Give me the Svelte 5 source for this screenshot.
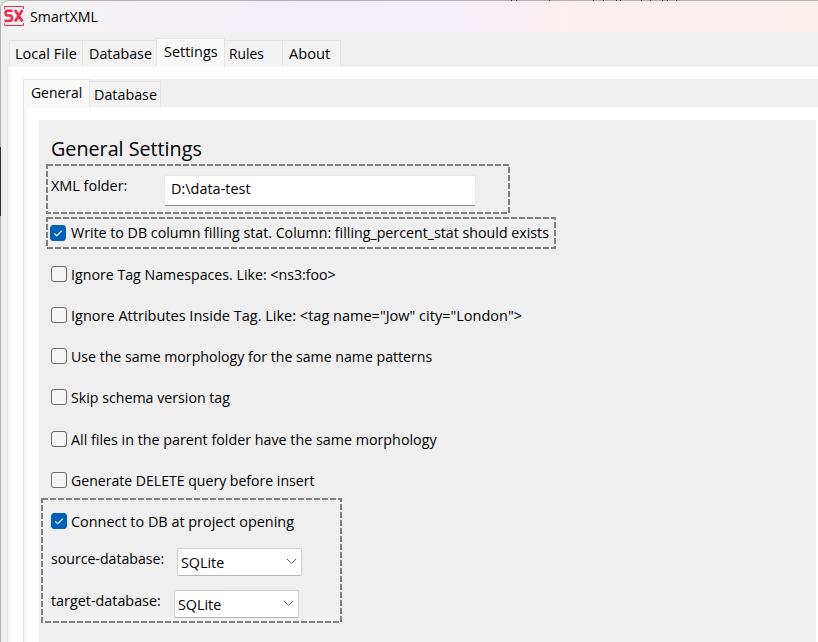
<script>
  const tabs = [
    { label: 'Local File', w: 74, tw: 62, pad: 5 },
    { label: 'Database', w: 75, tw: 63, pad: 6 },
    { label: 'Settings', w: 69, tw: 54, pad: 7, active: true },
    { label: 'Rules', w: 59, tw: 35, pad: 4 },
    { label: 'About', w: 59, tw: 41, pad: 6 }
  ];
  const options = [
    { label: 'Ignore Tag Namespaces. Like: <ns3:foo>', tw: 265 },
    { label: 'Ignore Attributes Inside Tag. Like: <tag name="Jow" city="London">', tw: 451 },
    { label: 'Use the same morphology for the same name patterns', tw: 361 },
    { label: 'Skip schema version tag', tw: 159 },
    { label: 'All files in the parent folder have the same morphology', tw: 366 },
    { label: 'Generate DELETE query before insert', tw: 243 }
  ];
  const specks = [510, 515, 548, 592, 602, 615, 619, 640, 649, 661, 666, 675];

  // Narrows or widens a label so that it fills the given width.
  function fit(node, width) {
    node.style.display = 'inline-block';
    node.style.transformOrigin = '0 50%';
    node.style.flex = 'none';
    const apply = () => {
      const natural = node.offsetWidth;
      node.style.transform = `scaleX(${width / natural})`;
      node.style.marginRight = width - natural + 'px';
    };
    apply();
    document.fonts.ready.then(apply);
  }
</script>

{#snippet frame(w, h)}
  <svg class="frame" width={w} height={h} aria-hidden="true">
    <rect x="1" y="1" width={w - 2} height={h - 2} fill="none" stroke="#808080" stroke-width="2" stroke-dasharray="6 2" />
  </svg>
{/snippet}

{#snippet box(checked)}
  <span class="box" class:checked>
    {#if checked}
      <svg width="16" height="16" viewBox="0 0 16 16"><path d="M4.2 8.3 6.8 10.7 11.8 5.7" fill="none" stroke="#fff" stroke-width="1.1" /></svg>
    {/if}
  </span>
{/snippet}

{#snippet combo()}
  <div class="combo">
    <span use:fit={43}>SQLite</span>
    <svg width="11" height="7" viewBox="0 0 11 7"><path d="M.8.9 5.5 5.4 10.2.9" fill="none" stroke="#555" stroke-width="1" /></svg>
  </div>
{/snippet}

<div class="window">
  <header>
    <svg class="logo" width="22" height="22" viewBox="0 0 22 22">
      <path d="M.5 3V.5H19.5V3M.5 17V19.5H19.5V17" fill="none" stroke="#ee2c4c" stroke-width="1" />
      <path d="M8.500 4.750H3.500Q1.500 4.750 1.500 7T3.500 9.500H6Q8 9.500 8 12T6 14.750H.5M11 4 18.500 15.500M18.500 4 11 15.500" fill="none" stroke="#ee2c4c" stroke-width="2.600" />
    </svg>
    <span class="title"><span use:fit={68}>SmartXML</span></span>
  </header>
  <nav class="main-tabs">
    {#each tabs as t}
      <div class="tab" class:active={t.active} style="width:{t.w}px;padding-left:{t.pad}px"><span use:fit={t.tw}>{t.label}</span></div>
    {/each}
  </nav>
  <main>
    <nav class="sub-tabs">
      <div class="tab active general"><span use:fit={51}>General</span></div>
      <div class="tab db"><span use:fit={63}>Database</span></div>
    </nav>
    <section class="pane">
      <div class="panel">
        <h1><span use:fit={151}>General Settings</span></h1>
        <div class="folder">
          {@render frame(464, 50)}
          <label for="folder"><span use:fit={76}>XML folder:</span></label>
          <div class="input" id="folder"><span use:fit={80}>D:\data-test</span></div>
        </div>
        <div class="stat">
          {@render frame(510, 32)}
          {@render box(true)}
          <span class="text" use:fit={478}>Write to DB column filling stat. Column: filling_percent_stat should exists</span>
        </div>
        <div class="options">
          {#each options as o}
            <div class="option">{@render box(false)}<span class="text" use:fit={o.tw}>{o.label}</span></div>
          {/each}
        </div>
        <div class="connect">
          {@render frame(301, 125)}
          <div class="option">{@render box(true)}<span use:fit={223}>Connect to DB at project opening</span></div>
          <div class="row source"><span use:fit={113}>source-database:</span>{@render combo()}</div>
          <div class="row target"><span use:fit={110}>target-database:</span>{@render combo()}</div>
        </div>
      </div>
    </section>
  </main>
  {#each specks as x}<i class="speck" style="left:{x}px"></i>{/each}
  <i class="edge"></i>
</div>

<style>
  :global(body) { background: #e4e4e0; overflow: hidden; }
  .window {
    position: relative; box-sizing: border-box; width: 818px; height: 642px;
    border: solid #b3b0ae; border-width: 1px 0 0 1px; border-radius: 9px 0 0 0;
    background: #efefef; color: #000; font: 15px/18px 'Open Sans', 'Noto Sans', sans-serif;
    display: flex; flex-direction: column; white-space: nowrap;
  }
  .window * { box-sizing: border-box; }
  header {
    height: 31px; flex: none; display: flex; padding: 5px 0 0 3px; border-radius: 8px 0 0 0;
    background: linear-gradient(100deg, #f3f3f3 0%, #f4eff7 35%, #f5eff8 55%, #faeff0 70%, #faefed 100%);
  }
  .title { margin: 1px 0 0 4px; }
  .logo { flex: none; }
  nav { display: flex; align-items: flex-end; position: relative; z-index: 1; }
  .main-tabs { height: 34px; flex: none; padding-left: 8px; }
  .tab { height: 26px; border: 1px solid #e3e3e3; border-bottom: 0; background: #f2f2f2; padding-top: 3px; margin-right: -1px; flex: none; }
  .tab.active { height: 29px; background: #f9f9f9; z-index: 1; margin-bottom: -1px; }
  main { flex: 1; margin-left: 6px; border: solid #e3e3e3; border-width: 1px 0 0 1px; background: #fff; box-shadow: inset 3px 1px #f9f9f9; padding: 13px 0 0 15px; display: flex; flex-direction: column; margin-top: -1px; }
  .sub-tabs { height: 28px; flex: none; background: #efefef; }
  .sub-tabs .general { width: 67px; padding-left: 7px; height: 29px; }
  .sub-tabs .db { width: 72px; padding-left: 4px; }
  .pane { flex: 1; border: solid #e3e3e3; border-width: 1px 0 0 1px; margin-top: -1px; box-shadow: inset 3px 1px #f9f9f9; padding: 13px 2px 0 15px; display: flex; }
  .panel { flex: 1; background: #efefef; padding: 14px 0 0 2px; }
  h1 { margin: 0 0 0 10px; height: 30px; font-size: 20.500px; line-height: 28px; font-weight: 400; }
  .frame { position: absolute; left: 0; top: 0; }
  .folder { position: relative; width: 464px; height: 50px; margin-left: 5px; display: flex; padding: 12px 0 0 5px; }
  .folder label { width: 113px; }
  .input { width: 312px; height: 31px; background: #fff; border: 1px solid #e8e8e8; border-bottom-color: #868686; border-radius: 2px; padding: 3px 0 0 6px; margin-top: -1px; }
  .stat { position: relative; width: 510px; height: 32px; margin: 3px 0 0 5px; display: flex; align-items: center; padding-left: 4px; }
  .stat .text { padding-bottom: 2px; }
  .box { width: 16px; height: 16px; border: 1px solid #6a6a6a; border-radius: 3px; background: #f5f5f5; flex: none; margin-right: 4px; }
  .stat .box { margin-right: 5px; }
  .box.checked { background: #005fb8; border-color: #005fb8; }
  .box svg { display: block; margin: -1px; }
  .option { height: 20px; display: flex; align-items: center; }
  .options { padding: 14.740px 0 0 10px; display: grid; gap: 21.250px; }
  .connect { position: relative; width: 301px; height: 125px; padding: 13px 0 0 10px; margin-top: 8px; }
  .row { display: flex; align-items: flex-start; }
  .row > span { padding-top: 1px; }
  .source { margin-top: 17px; height: 42px; }
  .combo { width: 125px; height: 28px; border: 1px solid #cfcfcf; border-bottom-color: #b5b5b5; border-radius: 2px; background: #fff; display: flex; align-items: center; justify-content: space-between; padding: 0 4px 0 3px; margin-left: 13px; }
  .speck { position: absolute; top: -1px; width: 1px; height: 1px; background: #333; }
  .edge { position: absolute; left: -1px; top: 146px; width: 1px; height: 69px; background: #2b2b2b; }
</style>
